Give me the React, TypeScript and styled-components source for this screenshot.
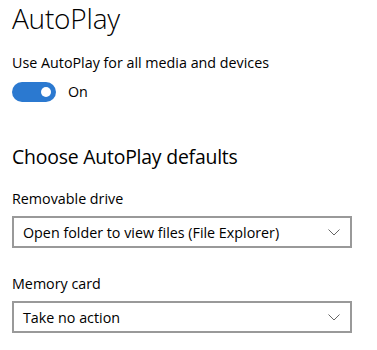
import React from "react";
import styled, { createGlobalStyle } from "styled-components";

const Global = createGlobalStyle`
  html, body { margin: 0; padding: 0; background: #ffffff; }
  body { font-family: "Open Sans", "Noto Sans", sans-serif; color: #000; }
`;

const Page = styled.div`
  padding: 1px 0 0 12px;
  width: 340px;
`;

const Title = styled.h1`
  margin: 0;
  font-size: 28px;
  font-weight: 300;
  line-height: 34px;
  letter-spacing: -0.2px;
`;

const Label = styled.div<{ $top: number }>`
  margin-top: ${(p) => p.$top}px;
  font-size: 14.3px;
  line-height: 20px;
`;

const ToggleRow = styled.div`
  display: flex;
  align-items: center;
  gap: 12px;
  margin-top: 9px;
  height: 20px;
`;

const Track = styled.div`
  width: 44px;
  height: 20px;
  border-radius: 10px;
  background: #2b79d0;
  display: flex;
  align-items: center;
  justify-content: flex-end;
  padding-right: 5px;
  box-sizing: border-box;
`;

const Knob = styled.div`
  width: 10px;
  height: 10px;
  border-radius: 50%;
  background: #fff;
`;

const ToggleText = styled.span`
  font-size: 14.3px;
  line-height: 20px;
`;

const Subtitle = styled.h2`
  margin: 42px 0 0;
  font-size: 19.4px;
  font-weight: 400;
  line-height: 26px;
  letter-spacing: -0.2px;
`;

const Select = styled.div`
  margin-top: 7px;
  height: 32px;
  box-sizing: border-box;
  border: 2px solid #999999;
  display: flex;
  align-items: center;
  justify-content: space-between;
  padding: 0 10px 0 9px;
  font-size: 14.3px;
`;

const Chevron = styled.svg`
  width: 12px;
  height: 7px;
  flex: none;
`;

const Spacer = styled.div<{ $h: number }>`
  height: ${(p) => p.$h}px;
`;

const Dropdown = ({ value }: { value: string }) => (
  <Select>
    <span>{value}</span>
    <Chevron viewBox="0 0 12 7">
      <path d="M0.5 0.5 L6 6 L11.5 0.5" fill="none" stroke="#666" strokeWidth="1" />
    </Chevron>
  </Select>
);

export default function App() {
  return (
    <>
      <Global />
      <Page>
        <Title>AutoPlay</Title>
        <Label $top={18}>Use AutoPlay for all media and devices</Label>
        <ToggleRow>
          <Track>
            <Knob />
          </Track>
          <ToggleText>On</ToggleText>
        </ToggleRow>
        <Subtitle>Choose AutoPlay defaults</Subtitle>
        <Label $top={19}>Removable drive</Label>
        <Dropdown value="Open folder to view files (File Explorer)" />
        <Spacer $h={26} />
        <Label $top={0}>Memory card</Label>
        <Dropdown value="Take no action" />
      </Page>
    </>
  );
}
